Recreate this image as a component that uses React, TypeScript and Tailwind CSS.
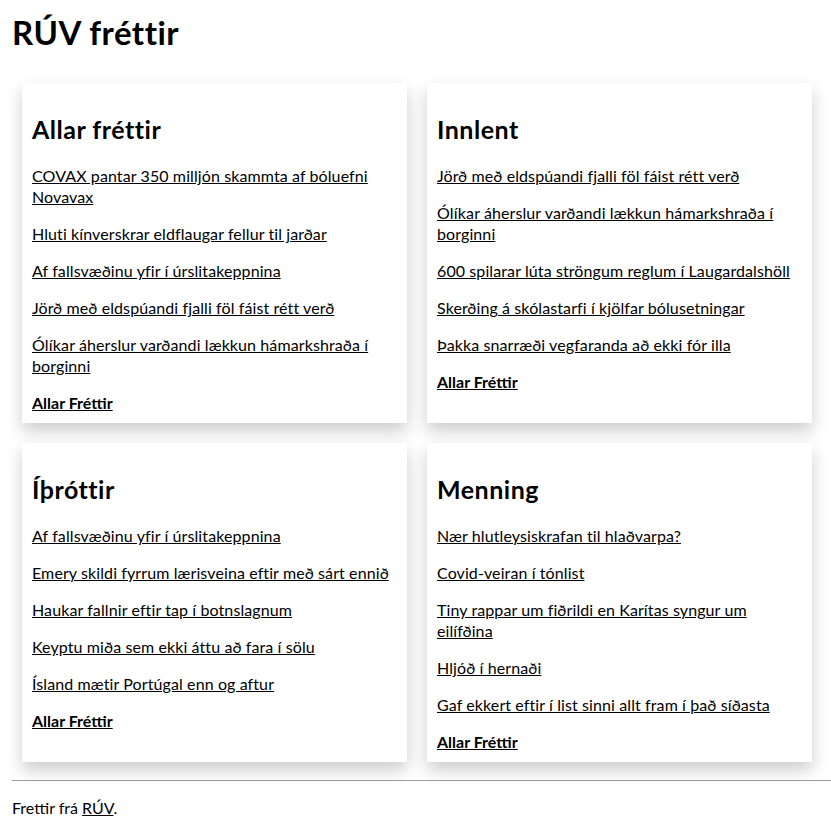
import React from "react";

type Card = { title: string; links: string[] };

const cards: Card[] = [
  {
    title: "Allar fréttir",
    links: [
      "COVAX pantar 350 milljón skammta af bóluefni Novavax",
      "Hluti kínverskrar eldflaugar fellur til jarðar",
      "Af fallsvæðinu yfir í úrslitakeppnina",
      "Jörð með eldspúandi fjalli föl fáist rétt verð",
      "Ólíkar áherslur varðandi lækkun hámarkshraða í borginni",
    ],
  },
  {
    title: "Innlent",
    links: [
      "Jörð með eldspúandi fjalli föl fáist rétt verð",
      "Ólíkar áherslur varðandi lækkun hámarkshraða í borginni",
      "600 spilarar lúta ströngum reglum í Laugardalshöll",
      "Skerðing á skólastarfi í kjölfar bólusetningar",
      "Þakka snarræði vegfaranda að ekki fór illa",
    ],
  },
  {
    title: "Íþróttir",
    links: [
      "Af fallsvæðinu yfir í úrslitakeppnina",
      "Emery skildi fyrrum lærisveina eftir með sárt ennið",
      "Haukar fallnir eftir tap í botnslagnum",
      "Keyptu miða sem ekki áttu að fara í sölu",
      "Ísland mætir Portúgal enn og aftur",
    ],
  },
  {
    title: "Menning",
    links: [
      "Nær hlutleysiskrafan til hlaðvarpa?",
      "Covid-veiran í tónlist",
      "Tiny rappar um fiðrildi en Karítas syngur um eilífðina",
      "Hljóð í hernaði",
      "Gaf ekkert eftir í list sinni allt fram í það síðasta",
    ],
  },
];

export default function App() {
  return (
    <div
      className="min-h-[831px] bg-white text-black"
      style={{ fontFamily: "Lato, 'Open Sans', sans-serif" }}
    >
      <div className="pl-[12px]">
        <h1 className="pt-[12px] text-[33px] font-bold leading-[40px] tracking-[0.5px]">
          RÚV fréttir
        </h1>
        <div className="mt-[31px] grid w-[810px] grid-cols-2 gap-[20px] px-[10px]">
          {cards.map((c) => (
            <section
              key={c.title}
              className="bg-white p-[10px] shadow-[0_8px_16px_0_rgba(0,0,0,0.2)]"
            >
              <h2 className="mt-[20px] mb-[20px] text-[25px] font-bold leading-[32px] tracking-[0.5px]">
                {c.title}
              </h2>
              <ul className="flex flex-col gap-[16px] text-[16px] leading-[21px] tracking-[0.1px]">
                {c.links.map((l, i) => (
                  <li key={i}>
                    <a href="#" className="underline">
                      {l}
                    </a>
                  </li>
                ))}
                <li>
                  <a href="#" className="font-bold underline tracking-normal">
                    Allar Fréttir
                  </a>
                </li>
              </ul>
            </section>
          ))}
        </div>
        <div className="mt-[18px] border-t border-[#a0a0a0]" />
        <p className="mt-[16px] text-[16px] leading-[21px]">
          Frettir frá{" "}
          <a href="#" className="underline">
            RÚV
          </a>
          .
        </p>
      </div>
    </div>
  );
}
